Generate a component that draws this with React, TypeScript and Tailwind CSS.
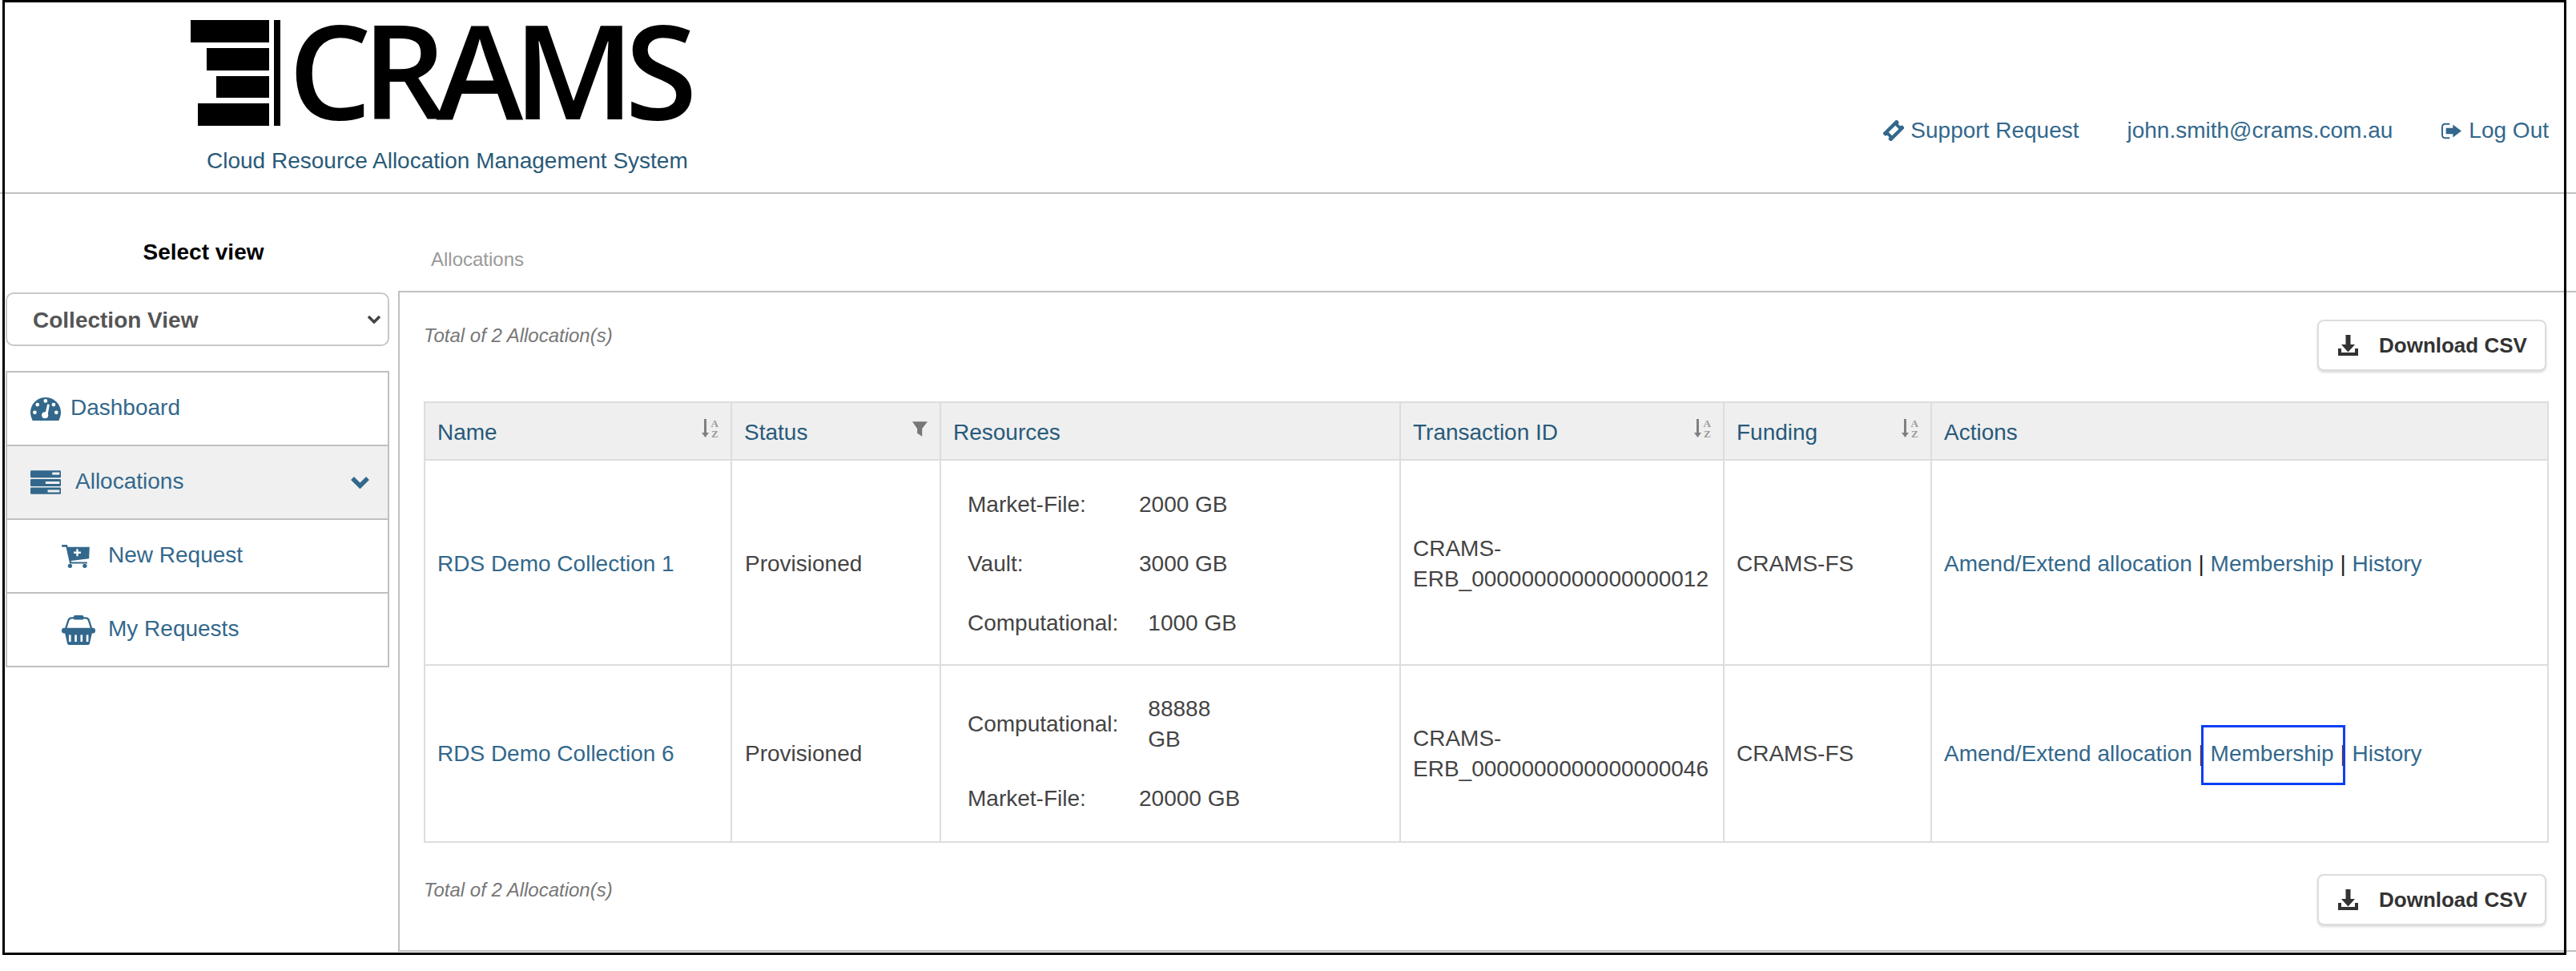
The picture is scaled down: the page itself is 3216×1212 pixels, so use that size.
import React from "react";

const SANS = "font-['Liberation_Sans',Arial,sans-serif]";

function SortIcon() {
    return (
        <span className="mt-[1px] flex h-[26px] w-[21px] items-start justify-between text-[#808080]">
            <svg viewBox="0 0 9 25" className="w-[9px] h-[25px]" fill="currentColor">
                <path d="M3 1h3v17h3l-4.500 6-4.500-6h3z" />
            </svg>
            <span className="flex flex-col items-center font-['Liberation_Serif',serif] text-[13px] leading-[13px] font-bold text-[#999999]">
                <span>A</span>
                <span>Z</span>
            </span>
        </span>
    );
}

function FilterIcon() {
    return (
        <svg viewBox="832 52 56 55" className="mt-[5px] w-[19px] h-[19px] text-[#777777]" fill="currentColor">
            <path d="M832 52h56l-20 26v29l-18-12V78z" />
        </svg>
    );
}

function DownloadIcon() {
    return (
        <svg viewBox="0 0 25 26" className="w-[25px] h-[26px]" fill="currentColor">
            <path d="M9.5 0h6v12H21l-8.5 9.5L4 12h5.5z" />
            <path d="M0 17h4v5h17v-5h4v9H0z" />
        </svg>
    );
}

function DashboardIcon() {
    return (
        <svg viewBox="54 77 113 86" className="w-[38px] h-[29px]">
            <path fill="currentColor" d="M62 163C57 152 54 143 54 133 54 101 79 77 110 77s57 24 57 56c0 10-3 19-8 30z" />
            <g fill="#ffffff">
                <circle cx="110" cy="90" r="7" />
                <circle cx="80" cy="104" r="7" />
                <circle cx="140" cy="104" r="7" />
                <circle cx="70" cy="133" r="7" />
                <circle cx="150" cy="133" r="7" />
                <circle cx="108" cy="143" r="12" />
                <path d="M117 102l8 2-7 38-10-2z" />
            </g>
        </svg>
    );
}

function TasksIcon() {
    return (
        <svg viewBox="54 344 113 88" className="w-[38px] h-[30px]">
            <rect x="54" y="344" width="113" height="27" rx="4" fill="currentColor" />
            <rect x="54" y="376" width="113" height="27" rx="4" fill="currentColor" />
            <rect x="54" y="407" width="113" height="25" rx="4" fill="currentColor" />
            <rect x="135" y="351" width="27" height="9" fill="#f0f0f0" />
            <rect x="110" y="385" width="52" height="9" fill="#f0f0f0" />
            <rect x="118" y="416" width="44" height="9" fill="#f0f0f0" />
        </svg>
    );
}

function CartPlusIcon() {
    return (
        <svg viewBox="175 628 105 88" className="w-[35px] h-[29px]">
            <path fill="currentColor" d="M175 628h20l3 8h82l-2 44-68 9 1 4h60v6h-66l-14-63h-16z" />
            <circle cx="206" cy="708" r="8" fill="currentColor" />
            <circle cx="262" cy="708" r="8" fill="currentColor" />
            <path fill="#ffffff" d="M230 644h7v10h10v7h-10v10h-7v-10h-10v-7h10z" />
        </svg>
    );
}

function BasketIcon() {
    return (
        <svg viewBox="175 888 127 112" className="w-[42px] h-[37px]">
            <path fill="none" stroke="currentColor" strokeWidth="7" d="M190 940l10-32c2-7 6-10 13-10h52c7 0 11 3 13 10l10 32" />
            <rect x="220" y="888" width="38" height="17" rx="6" fill="currentColor" />
            <rect x="175" y="936" width="127" height="20" rx="9" fill="currentColor" />
            <path fill="currentColor" d="M186 950h105l-10 44c-1 4-3 6-7 6h-71c-4 0-6-2-7-6z" />
            <g fill="#ffffff">
                <rect x="202" y="962" width="8" height="26" />
                <rect x="224" y="962" width="8" height="26" />
                <rect x="246" y="962" width="8" height="26" />
                <rect x="268" y="962" width="8" height="26" />
            </g>
        </svg>
    );
}

function TicketIcon() {
    return (
        <svg viewBox="36 27 77 78" className="w-[26px] h-[26px]">
            <g transform="rotate(-45 75 66)">
                <path fill="currentColor" d="M38 44h74v14a7 7 0 0 0 0 16v14H38V74a7 7 0 0 0 0-16z" />
                <rect x="57" y="57" width="36" height="18" fill="#ffffff" />
            </g>
        </svg>
    );
}

function LogoutIcon() {
    return (
        <svg viewBox="25 35 75 62" className="w-[25px] h-[21px]">
            <path fill="none" stroke="currentColor" strokeWidth="6" d="M56 40H39q-11 0-11 11v30q0 11 11 11h17" />
            <path fill="currentColor" d="M42 55h26V42l32 24-32 24V77H42z" />
        </svg>
    );
}

function Logo() {
    return (
        <div className="flex h-[132px] items-start">
            <div className="flex h-[132px] w-[98px] flex-col items-end justify-between">
                <span className="block h-[28px] w-[98px] bg-black" />
                <span className="block h-[28px] w-[78px] bg-black" />
                <span className="block h-[27px] w-[66px] bg-black" />
                <span className="block h-[28px] w-[89px] bg-black" />
            </div>
            <span className="ml-[6px] block h-[132px] w-[8px] bg-black" />
            <span className="ml-[10px] block font-['Open_Sans',sans-serif] text-[164px] leading-[121px] font-semibold tracking-[-12px] text-black">
                CRAMS
            </span>
        </div>
    );
}

function NavRow({ icon, label, sub, active, chevron, gap }: { icon: React.ReactNode; label: string; sub?: boolean; active?: boolean; chevron?: boolean; gap: string }) {
    return (
        <div className={`flex h-[92px] items-center border-t-2 border-[#c0c0c0] pl-[29px] text-[28px] text-[#33688c] ${active ? "bg-[#f0f0f0]" : "bg-white"}`}>
            <span className={`flex items-center ${sub ? "w-[97px] pl-[39px]" : gap}`}>{icon}</span>
            <span className="-mt-[2px]">{label}</span>
            {chevron && (
                <svg viewBox="0 0 25 16" className="ml-auto mr-[22px] w-[25px] h-[16px]">
                    <path d="M3 3l9.5 9.5L22 3" fill="none" stroke="currentColor" strokeWidth="5.5" />
                </svg>
            )}
        </div>
    );
}

function HeadCell({ label, icon }: { label: string; icon?: React.ReactNode }) {
    return (
        <th className="border-2 border-[#dddddd] bg-[#efefef] px-[15px] text-left font-normal text-[#275a7a]">
            <div className="flex items-start justify-between">
                <span className="pt-[3px]">{label}</span>
                {icon && <span className="-mt-[1px] flex h-[38px] items-start pt-[4px]">{icon}</span>}
            </div>
        </th>
    );
}

function Resource({ label, value }: { label: string; value: React.ReactNode }) {
    return (
        <div className="flex items-center py-[18px]">
            <span className="min-w-[214px] shrink-0 pr-[37px]">{label}</span>
            <span>{value}</span>
        </div>
    );
}

function Actions({ focused }: { focused?: boolean }) {
    return (
        <span className="text-[#222222]">
            <a className="text-[#33688c]">Amend/Extend allocation</a> | <a className="relative text-[#33688c]">
                Membership
                {focused && <span className="absolute -left-[12px] -right-[14px] -top-[20px] -bottom-[24px] border-[3px] border-[#0b3ff5]" />}
            </a> | <a className="text-[#33688c]">History</a>
        </span>
    );
}

function Toolbar() {
    return (
        <div className="flex items-start justify-between pr-[37px]">
            <span className="mt-[3px] text-[24px] leading-[34px] italic text-[#777777]">Total of 2 Allocation(s)</span>
            <button className="flex h-[64px] w-[286px] items-center rounded-[8px] border-2 border-[#dddddd] bg-white pl-[24px] text-[26px] font-bold text-[#333333] shadow-[0_2px_3px_rgba(0,0,0,0.15)]">
                <DownloadIcon />
                <span className="ml-[26px]">Download CSV</span>
            </button>
        </div>
    );
}

const CELL = "border-2 border-[#dddddd] px-[15px]";

export default function App() {
    return (
        <div className={`relative h-[1212px] w-[3216px] overflow-hidden bg-white ${SANS} text-[28px] leading-[38px] text-[#444444]`}>

            {/* header */}
            <header className="flex h-[242px] items-start justify-between border-b-2 border-[#c0c0c0]">
                <div className="pl-[238px] pt-[25px]">
                    <Logo />
                    <p className="mt-[25px] ml-[20px] text-[#2a5a78]">Cloud Resource Allocation Management System</p>
                </div>
                <nav className="flex items-center pt-[144px] pr-[34px] text-[#33688c]">
                    <TicketIcon />
                    <span className="ml-[8px]">Support Request</span>
                    <span className="ml-[60px]">john.smith@crams.com.au</span>
                    <span className="ml-[61px]"><LogoutIcon /></span>
                    <span className="ml-[9px]">Log Out</span>
                </nav>
            </header>

            <div className="flex">
                {/* sidebar */}
                <aside className="w-[497px] shrink-0">
                    <p className="pl-[11px] pt-[54px] text-center font-bold text-black">Select view</p>
                    <div className="mt-[31px] ml-[7px] flex h-[67px] w-[479px] items-center justify-between rounded-[10px] border-2 border-[#c8c8c8] pl-[32px] pr-[8px] font-bold text-[#555555]">
                        <span className="pt-[2px]">Collection View</span>
                        <svg viewBox="0 0 18 11" className="w-[18px] h-[11px] text-[#444444]">
                            <path d="M2 2l7 7 7-7" fill="none" stroke="currentColor" strokeWidth="3.5" />
                        </svg>
                    </div>
                    <div className="mt-[31px] ml-[7px] w-[479px] border-x-2 border-b-2 border-[#c0c0c0]">
                        <NavRow icon={<DashboardIcon />} label="Dashboard" gap="w-[50px]" />
                        <NavRow icon={<TasksIcon />} label="Allocations" active chevron gap="w-[56px]" />
                        <NavRow icon={<CartPlusIcon />} label="New Request" sub gap="" />
                        <NavRow icon={<BasketIcon />} label="My Requests" sub gap="" />
                    </div>
                </aside>

                {/* main */}
                <main className="flex-1">
                    <p className="h-[121px] pl-[41px] pt-[65px] text-[24px] leading-[34px] text-[#999999]">Allocations</p>
                    <section className="border-y-2 border-l-2 border-[#c0c0c0] pb-[31px] pl-[30px] pt-[34px]">
                        <Toolbar />
                        <table className="mt-[38px] w-[2651px] table-fixed">
                            <colgroup>
                                <col className="w-[383px]" />
                                <col className="w-[261px]" />
                                <col className="w-[574px]" />
                                <col className="w-[404px]" />
                                <col className="w-[259px]" />
                                <col className="w-[770px]" />
                            </colgroup>
                            <thead>
                                <tr className="h-[72px]">
                                    <HeadCell label="Name" icon={<SortIcon />} />
                                    <HeadCell label="Status" icon={<FilterIcon />} />
                                    <HeadCell label="Resources" />
                                    <HeadCell label="Transaction ID" icon={<SortIcon />} />
                                    <HeadCell label="Funding" icon={<SortIcon />} />
                                    <HeadCell label="Actions" />
                                </tr>
                            </thead>
                            <tbody>
                                <tr className="h-[256px]">
                                    <td className={`${CELL} pt-[4px] text-[#33688c]`}>RDS Demo Collection 1</td>
                                    <td className={`${CELL} pt-[4px] pl-[16px]`}>Provisioned</td>
                                    <td className={`${CELL} pt-[4px] pl-[33px]`}>
                                        <Resource label="Market-File:" value="2000 GB" />
                                        <Resource label="Vault:" value="3000 GB" />
                                        <Resource label="Computational:" value="1000 GB" />
                                    </td>
                                    <td className={`${CELL} pt-[4px]`}>CRAMS-<br />ERB_0000000000000000012</td>
                                    <td className={`${CELL} pt-[4px]`}>CRAMS-FS</td>
                                    <td className={`${CELL} pt-[4px]`}><Actions /></td>
                                </tr>
                                <tr className="h-[221px]">
                                    <td className={`${CELL} text-[#33688c]`}>RDS Demo Collection 6</td>
                                    <td className={`${CELL} pl-[16px]`}>Provisioned</td>
                                    <td className={`${CELL} pl-[33px]`}>
                                        <Resource label="Computational:" value={<>88888<br />GB</>} />
                                        <Resource label="Market-File:" value="20000 GB" />
                                    </td>
                                    <td className={CELL}>CRAMS-<br />ERB_0000000000000000046</td>
                                    <td className={CELL}>CRAMS-FS</td>
                                    <td className={CELL}><Actions focused /></td>
                                </tr>
                            </tbody>
                        </table>
                        <div className="mt-[39px]"><Toolbar /></div>
                    </section>
                </main>
            </div>

            {/* black frame drawn over the capture */}
            <div className="pointer-events-none absolute left-[3px] top-0 h-[1192px] w-[3201px] border-[3px] border-black" />
        </div>
    );
}
